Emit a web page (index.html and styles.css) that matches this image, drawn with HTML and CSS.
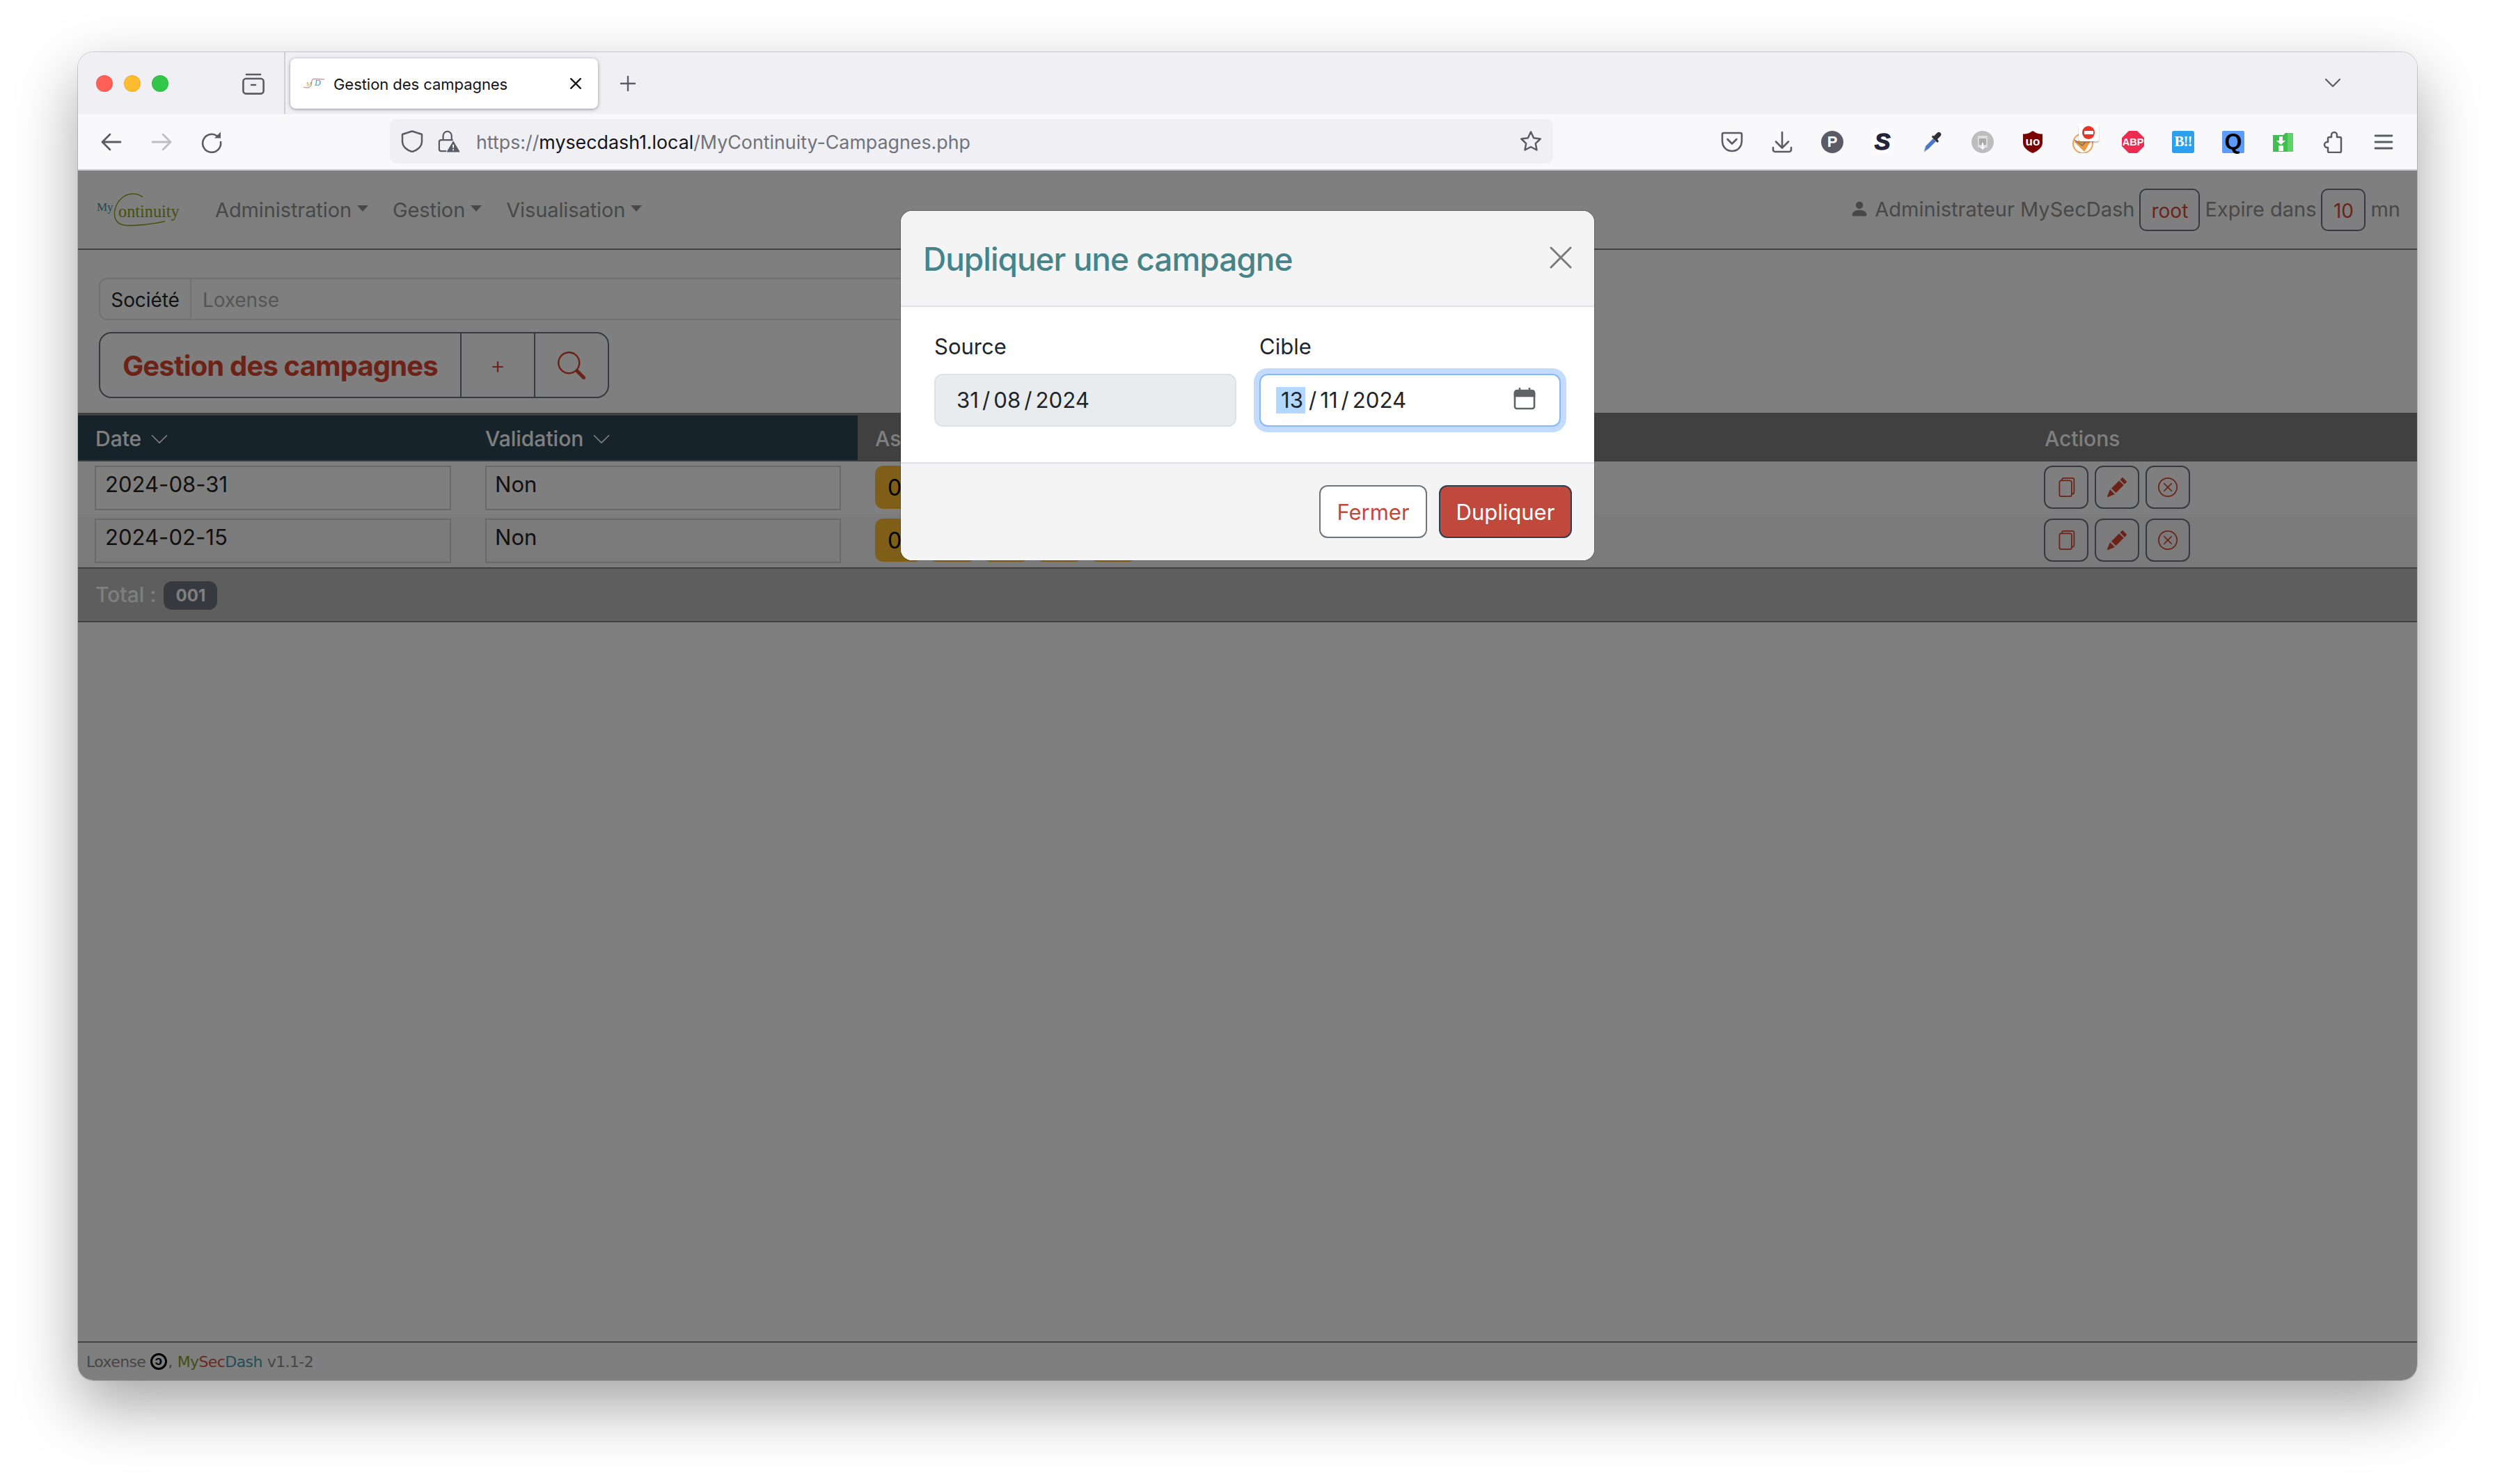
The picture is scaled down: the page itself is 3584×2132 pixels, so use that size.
FILE: index.html
```html
<!DOCTYPE html>
<html lang="fr">
<head>
<meta charset="utf-8">
<title>Gestion des campagnes</title>
<link rel="stylesheet" href="styles.css">
</head>
<body>
<div class="window">
  <header class="tabbar">
    <div class="lights"><i class="light red"></i><i class="light amber"></i><i class="light green"></i></div>
    <svg class="ffview" viewBox="0 0 32 32" fill="none" stroke="#5b5b66" stroke-width="2.6" stroke-linecap="round"><path d="M6 3h20"/><rect x="1.4" y="9" width="29.2" height="21.6" rx="4"/><path d="M13 18h6"/></svg>
    <div class="tabsep"></div>
    <div class="tab">
      <svg class="favicon" viewBox="0 0 32 14"><path d="M1 12c5 2 10 1 11-3l1-6c.5-2 1-2.5 3-2.5l15 .5" fill="none" stroke="#c96a6a" stroke-width="1"/><text x="5" y="11" class="fav-m">M</text><text x="17" y="10" class="fav-d">D</text></svg>
      <span class="tabtitle">Gestion des campagnes</span>
      <svg class="tabclose" viewBox="0 0 16 16" stroke="#15141a" stroke-width="1.8" stroke-linecap="round"><path d="M2.5 2.5l11 11M13.5 2.5l-11 11"/></svg>
    </div>
    <svg class="newtab" viewBox="0 0 24 24" stroke="#5b5b66" stroke-width="2.4" stroke-linecap="round"><path d="M12 2v20M2 12h20"/></svg>
    <svg class="tabmenu" viewBox="0 0 24 14" fill="none" stroke="#5b5b66" stroke-width="2.2" stroke-linecap="round" stroke-linejoin="round"><path d="M2 2l10 10L22 2"/></svg>
  </header>

  <nav class="toolbar">
    <svg class="tool" viewBox="0 0 32 32" fill="none" stroke="#5b5b66" stroke-width="2.8" stroke-linecap="round" stroke-linejoin="round"><path d="M3 16h26M14 5L3 16l11 11"/></svg>
    <svg class="tool" viewBox="0 0 32 32" fill="none" stroke="#bdbdc3" stroke-width="2.8" stroke-linecap="round" stroke-linejoin="round"><path d="M3 16h26M18 5l11 11-11 11"/></svg>
    <svg class="tool" viewBox="0 0 32 32" fill="none" stroke="#5b5b66" stroke-width="2.6" stroke-linecap="round"><path d="M24 7.5A13 13 0 1 0 29 16"/><path d="M20 10.5L29 10.5 29 1.5Z" fill="#5b5b66" stroke="none"/></svg>
    <div class="urlbar">
      <svg class="tool" viewBox="0 0 32 32" fill="none" stroke="#5b5b66" stroke-width="2.5" stroke-linejoin="round"><path d="M16 1.5L30 6v10c0 8-7 13-14 15C9 29 2 24 2 16V6Z"/></svg>
      <svg class="tool" viewBox="0 0 34 34" fill="none" stroke="#5b5b66" stroke-width="2.4"><path d="M8 15V8.5a6.5 6.5 0 0 1 13 0V15"/><path d="M13 32H5a3 3 0 0 1-3-3V18a3 3 0 0 1 3-3h18"/><path d="M23.5 17L33 33H14Z" fill="#5b5b66" stroke="#5b5b66" stroke-width="1" stroke-linejoin="round"/><path d="M23.5 22v5M23.5 29v2" stroke="#fff" stroke-width="2"/></svg>
      <span class="url">https://<b class="host">mysecdash1.local</b>/MyContinuity-Campagnes.php</span>
      <svg class="tool star" viewBox="0 0 32 32" fill="none" stroke="#5b5b66" stroke-width="2.5" stroke-linejoin="round"><path d="M16 2.5l4.2 8.7 9.5 1.3-6.900 6.600 1.700 9.400L16 24l-8.500 4.500 1.700-9.400-6.900-6.600 9.500-1.300Z"/></svg>
    </div>
    <div class="extensions">
      <svg class="tool" viewBox="0 0 32 32" fill="none" stroke="#5b5b66" stroke-width="2.6" stroke-linecap="round" stroke-linejoin="round"><path d="M4 3h24a2 2 0 0 1 2 2v9c0 9-6 15-14 15S2 23 2 14V5a2 2 0 0 1 2-2Z"/><path d="M9.5 12l6.5 6.5 6.5-6.5"/></svg>
      <svg class="tool" viewBox="0 0 32 32" fill="none" stroke="#5b5b66" stroke-width="2.6" stroke-linecap="round" stroke-linejoin="round"><path d="M16 2v22M7 15.5l9 9 9-9M3 24v3a3 3 0 0 0 3 3h20a3 3 0 0 0 3-3v-3"/></svg>
      <span class="ext ext-p">P</span>
      <span class="ext ext-s">S</span>
      <svg class="tool" viewBox="0 0 32 32"><path d="M4 30l2-8L17 11l4 4-11 11Z" fill="#4a78c8" stroke="#b8b8b8" stroke-width="1"/><path d="M15 9l8 8 2-2-2-3 4-4c2-2 2-4 0-5.5s-3-1-5 1l-4 4-2-1Z" fill="#2f3036"/></svg>
      <svg class="tool" viewBox="0 0 32 32"><circle cx="16" cy="16" r="16" fill="#bdbdbd"/><path d="M9 7h14v17H9Z" fill="#dcdcdc"/><path d="M11 11h10v9H11Z" fill="#aaa"/><path d="M15 17h2v6h3l-4 4-4-4h3Z" fill="#fff"/></svg>
      <svg class="tool" viewBox="0 0 32 32"><path d="M16 0l5 3c3 1.5 6 1.5 9 1.5V17c0 7-7 12-14 15C9 29 2 24 2 17V4.5c3 0 6 0 9-1.5Z" fill="#7b0000"/><text x="16" y="21" class="ub">uo</text></svg>
      <span class="ext ext-fox">
        <svg class="fox-art" viewBox="0 0 32 32"><circle cx="16" cy="18" r="14" fill="none" stroke="#e8a25a" stroke-width="2"/><path d="M3 15l26-3-11 18Z" fill="#ec9a3f"/><path d="M4 13l11 8 4-4" fill="none" stroke="#6f6f6f" stroke-width="1.5"/></svg>
        <span class="stop"><i class="stop-bar"></i></span>
      </span>
      <svg class="tool" viewBox="0 0 32 32"><path d="M10 0h12l10 10v12L22 32H10L0 22V10Z" fill="#ed2a4f"/><text x="16" y="21" class="abp">ABP</text></svg>
      <span class="ext ext-b">B!!</span>
      <span class="ext ext-q">Q</span>
      <svg class="tool" viewBox="0 0 32 32"><path d="M1 6h15l3-3h11v26a1 1 0 0 1-1 1H1Z" fill="#3fbf4f"/><path d="M22 3h8v27h-8Z" fill="#5fd36a"/><path d="M10 8h5v6h4l-6.5 6L6 14h4Z" fill="#fff"/><rect x="9" y="21" width="7" height="8" rx="1" fill="#fff"/></svg>
      <svg class="tool" viewBox="0 0 32 32" fill="none" stroke="#5b5b66" stroke-width="2.5" stroke-linejoin="round"><path d="M13 9V6a4 4 0 0 1 8 0v3h4a2 2 0 0 1 2 2v18a2 2 0 0 1-2 2H10a2 2 0 0 1-2-2v-5H7a4 4 0 0 1 0-8h1v-5a2 2 0 0 1 2-2Z"/></svg>
      <svg class="tool" viewBox="0 0 32 32" stroke="#5b5b66" stroke-width="2.8" stroke-linecap="round"><path d="M4 7h24M4 16h24M4 25h24"/></svg>
    </div>
  </nav>

  <div class="page">
    <div class="topnav">
      <div class="logo">
        <svg class="logo-art" viewBox="0 0 120 47"><path d="M66 5C58-1 46-1 38 5 28 12 24 25 26 34 28 43 36 46 46 46 62 46 84 43 98 40" fill="none" stroke="#8ca018" stroke-width="1.4"/><text x="0" y="25" class="logo-my">My</text><text x="31" y="34" class="logo-co">ontinuity</text></svg>
      </div>
      <a class="menu caret">Administration</a>
      <a class="menu caret">Gestion</a>
      <a class="menu caret">Visualisation</a>
      <div class="session">
        <svg class="person" viewBox="0 0 16 16"><path d="M3 14s-1 0-1-1 1-4 6-4 6 3 6 4-1 1-1 1H3zm5-6a3 3 0 1 0 0-6 3 3 0 0 0 0 6z"/></svg>
        <span class="who">Administrateur MySecDash</span>
        <span class="chip chip-root">root</span>
        <span>Expire dans</span>
        <span class="chip chip-min">10</span>
        <span>mn</span>
      </div>
    </div>

    <main class="content">
      <div class="crumbs">
        <span class="crumb-label">Société</span>
        <span class="crumb-value">Loxense</span>
      </div>
      <div class="titlegroup">
        <h1 class="pagetitle">Gestion des campagnes</h1>
        <button class="titlebtn plus">+</button>
        <button class="titlebtn search"><svg class="searchicon" viewBox="0 0 16 16"><path d="M11.742 10.344a6.5 6.5 0 1 0-1.397 1.398h-.001c.03.04.062.078.098.115l3.85 3.85a1 1 0 0 0 1.415-1.414l-3.85-3.85a1.007 1.007 0 0 0-.115-.1zM12 6.5a5.5 5.5 0 1 1-11 0 5.5 5.5 0 0 1 11 0z"/></svg></button>
      </div>

      <div class="grid thead">
        <div class="th sorted">Date <svg class="chev" viewBox="0 0 16 16"><path d="M1.646 4.646a.5.5 0 0 1 .708 0L8 10.293l5.646-5.647a.5.5 0 0 1 .708.708l-6 6a.5.5 0 0 1-.708 0l-6-6a.5.5 0 0 1 0-.708z"/></svg></div>
        <div class="th sorted">Validation <svg class="chev" viewBox="0 0 16 16"><path d="M1.646 4.646a.5.5 0 0 1 .708 0L8 10.293l5.646-5.647a.5.5 0 0 1 .708.708l-6 6a.5.5 0 0 1-.708 0l-6-6a.5.5 0 0 1 0-.708z"/></svg></div>
        <div class="th">Assignations</div>
        <div class="th">Actions</div>
      </div>

      <div class="grid row">
        <div class="cell"><div class="field">2024-08-31</div></div>
        <div class="cell"><div class="field">Non</div></div>
        <div class="cell badges"><span class="badge">01</span><span class="badge">00</span><span class="badge">00</span><span class="badge">00</span><span class="badge">00</span></div>
        <div class="cell actions">
          <button class="act"><svg class="acticon" viewBox="0 0 16 16"><use href="#i-files"/></svg></button>
          <button class="act"><svg class="acticon" viewBox="0 0 16 16"><use href="#i-pencil"/></svg></button>
          <button class="act"><svg class="acticon" viewBox="0 0 16 16"><use href="#i-x"/></svg></button>
        </div>
      </div>
      <div class="grid row alt">
        <div class="cell"><div class="field">2024-02-15</div></div>
        <div class="cell"><div class="field">Non</div></div>
        <div class="cell badges"><span class="badge">00</span><span class="badge">00</span><span class="badge">00</span><span class="badge">00</span><span class="badge">00</span></div>
        <div class="cell actions">
          <button class="act"><svg class="acticon" viewBox="0 0 16 16"><use href="#i-files"/></svg></button>
          <button class="act"><svg class="acticon" viewBox="0 0 16 16"><use href="#i-pencil"/></svg></button>
          <button class="act"><svg class="acticon" viewBox="0 0 16 16"><use href="#i-x"/></svg></button>
        </div>
      </div>
      <div class="total"><span class="totallabel">Total :</span><span class="totalbadge">001</span></div>
    </main>

    <footer class="foot">
      <span>Loxense</span>
      <span class="copyleft"><span class="copyleft-c">c</span></span><span>,</span>
      <span class="brand"><span class="b-my">My</span><span class="b-sec">Sec</span><span class="b-dash">Dash</span></span>
      <span>v1.1-2</span>
    </footer>

    <div class="backdrop">
      <section class="modal">
        <div class="modal-head">
          <h2 class="modal-title">Dupliquer une campagne</h2>
          <svg class="modal-close" viewBox="0 0 32 32" stroke="#7a7a7a" stroke-width="3" stroke-linecap="round"><path d="M2 2l28 28M30 2L2 30"/></svg>
        </div>
        <div class="modal-body">
          <div class="form-col">
            <label class="form-label">Source</label>
            <div class="dateinput disabled"><span>31</span><em>/</em><span>08</span><em>/</em><span>2024</span></div>
          </div>
          <div class="form-col">
            <label class="form-label">Cible</label>
            <div class="dateinput focus"><span class="sel">13</span><em>/</em><span>11</span><em>/</em><span>2024</span>
              <svg class="calendar" viewBox="0 0 32 32" fill="none" stroke="#5f6368" stroke-width="2.6"><rect x="2" y="5" width="28" height="25" rx="3"/><path d="M2 7a3 3 0 0 1 3-3h22a3 3 0 0 1 3 3v5H2Z" fill="#5f6368"/><path d="M9 1v5M23 1v5" stroke-linecap="round"/></svg>
            </div>
          </div>
        </div>
        <div class="modal-foot">
          <button class="btn btn-close">Fermer</button>
          <button class="btn btn-go">Dupliquer</button>
        </div>
      </section>
    </div>
  </div>
</div>

<svg class="defs" width="0" height="0">
  <defs>
    <path id="i-files" d="M13 0H6a2 2 0 0 0-2 2 2 2 0 0 0-2 2v10a2 2 0 0 0 2 2h7a2 2 0 0 0 2-2 2 2 0 0 0 2-2V2a2 2 0 0 0-2-2zm0 13V4a2 2 0 0 0-2-2H5a1 1 0 0 1 1-1h7a1 1 0 0 1 1 1v10a1 1 0 0 1-1 1zM3 4a1 1 0 0 1 1-1h7a1 1 0 0 1 1 1v10a1 1 0 0 1-1 1H4a1 1 0 0 1-1-1V4z"/>
    <path id="i-pencil" d="M12.854.146a.5.5 0 0 0-.707 0L10.5 1.793 14.207 5.5l1.647-1.646a.5.5 0 0 0 0-.708l-3-3zm.646 6.061L9.793 2.5 3.293 9H3.5a.5.5 0 0 1 .5.5v.5h.5a.5.5 0 0 1 .5.5v.5h.5a.5.5 0 0 1 .5.5v.5h.5a.5.5 0 0 1 .5.5v.207l6.5-6.5zm-7.468 7.468A.5.5 0 0 1 6 13.5V13h-.5a.5.5 0 0 1-.5-.5V12h-.5a.5.5 0 0 1-.5-.5V11h-.5a.5.5 0 0 1-.5-.5V10h-.5a.499.499 0 0 1-.175-.032l-.179.178a.5.5 0 0 0-.11.168l-2 5a.5.5 0 0 0 .65.65l5-2a.5.5 0 0 0 .168-.11l.178-.178z"/>
    <path id="i-x" d="M8 15A7 7 0 1 1 8 1a7 7 0 0 1 0 14zm0 1A8 8 0 1 0 8 0a8 8 0 0 0 0 16zM4.646 4.646a.5.5 0 0 1 .708 0L8 7.293l2.646-2.647a.5.5 0 0 1 .708.708L8.707 8l2.647 2.646a.5.5 0 0 1-.708.708L8 8.707l-2.646 2.647a.5.5 0 0 1-.708-.708L7.293 8 4.646 5.354a.5.5 0 0 1 0-.708z"/>
  </defs>
</svg>
</body>
</html>
```
FILE: styles.css
```css
* { box-sizing: border-box; }
html, body { margin: 0; height: 100%; background: #fff; }
body { padding: 75px 112px 149px; font-family: Inter, "Liberation Sans", sans-serif; overflow: hidden; }
button { font-family: inherit; }
svg { display: block; flex: none; }
.defs { position: absolute; }

.window { height: 1908px; border-radius: 22px; overflow: hidden; display: flex; flex-direction: column; box-shadow: 0 0 0 1px rgba(0,0,0,.16), 0 36px 90px rgba(0,0,0,.36); }

/* tab strip */
.tabbar { height: 89px; flex: none; background: #f0f0f4; display: flex; align-items: center; padding-left: 26px; }
.lights { display: flex; gap: 16px; }
.light { width: 24px; height: 24px; border-radius: 50%; border: 1px solid rgba(0,0,0,.08); }
.red { background: #ff5f57; }
.amber { background: #febc2e; }
.green { background: #32c748; }
.ffview { width: 32px; height: 32px; margin-left: 106px; }
.tabsep { width: 2px; height: 100%; background: #cfcfd8; margin-left: 28px; }
.tab { width: 442px; height: 72px; margin-left: 7px; background: #fff; border-radius: 8px; box-shadow: 0 1px 5px rgba(0,0,0,.4); display: flex; align-items: center; padding-left: 18px; }
.favicon { width: 32px; height: 14px; margin-right: 12px; }
.fav-m { font: 9px "Liberation Serif", serif; fill: #a8b45a; }
.fav-d { font: italic 12px "Liberation Serif", serif; fill: #4f8f9c; }
.tabtitle { font-size: 22px; letter-spacing: -.05px; color: #15141a; margin-top: 3px; width: 338px; }
.tabclose { width: 20px; height: 20px; }
.newtab { width: 24px; height: 24px; margin-left: 31px; }
.tabmenu { width: 24px; height: 14px; margin-left: auto; margin-right: 109px; margin-top: -2px; }

/* toolbar */
.toolbar { height: 81px; flex: none; background: #f9f9fb; border-bottom: 2px solid #cfcfd2; display: flex; align-items: center; padding: 0 32px; gap: 40px; }
.tool { width: 32px; height: 32px; }
.urlbar { width: 1671px; height: 64px; margin-left: 200px; background: #f0f0f4; border-radius: 10px; display: flex; align-items: center; padding-left: 16px; gap: 21px; margin-top: -1px; }
.url { font-size: 26.8px; color: #72727a; margin-left: 2px; margin-top: 1px; }
.host { font-weight: 400; color: #15141a; }
.star { margin-left: auto; margin-right: 16px; }
.extensions { margin-left: auto; display: flex; gap: 40px; align-items: center; }
.ext { width: 32px; height: 32px; display: flex; align-items: center; justify-content: center; flex: none; font-family: "Liberation Sans", sans-serif; font-weight: 700; }
.ext-p { background: #5b5b66; color: #fff; border-radius: 50%; font-size: 22px; }
.ext-s { color: #24243a; font-size: 34px; font-style: italic; background: #fff; border-radius: 50%; -webkit-text-stroke: 1.4px #24243a; }
.ext-b { background: #2aa0ef; color: #fff; border-radius: 3px; font-family: "Liberation Serif", serif; font-size: 21px; letter-spacing: -1px; }
.ext-q { background: #5c9bfb; color: #000; font-size: 32px; border-radius: 2px; }
.ub { font: 700 17px "Liberation Sans", sans-serif; fill: #fff; text-anchor: middle; }
.abp { font: 700 14.5px "Liberation Sans", sans-serif; fill: #fff; text-anchor: middle; }
.ext-fox { position: relative; }
.fox-art { width: 32px; height: 32px; }
.stop { position: absolute; left: 10px; top: -10px; width: 29px; height: 25px; background: #fff; border-radius: 3px; display: flex; align-items: center; justify-content: center; box-shadow: 0 2px 2px rgba(0,0,0,.25); }
.stop::before { content: ""; position: absolute; left: 5px; top: 3px; width: 18px; height: 19px; border-radius: 50%; background: #e8352a; }
.stop-bar { position: relative; width: 13px; height: 5px; background: #fff; margin-left: -1px; }

/* page */
.page { flex: 1; position: relative; background: #fff; display: flex; flex-direction: column; min-height: 0; }
.topnav { height: 114px; flex: none; border-bottom: 2px solid #808080; display: flex; align-items: center; padding: 0 24px 0 27px; font-size: 29px; color: #909090; }
.logo { width: 119px; margin-right: 51px; margin-top: 1px; }
.logo-art { width: 120px; height: 47px; overflow: visible; }
.logo-my { font: 17px "Liberation Serif", serif; fill: #3f8fa3; }
.logo-co { font: 24.3px "Liberation Serif", serif; fill: #8ca018; }
.menu { margin-right: 35px; margin-top: 1px; letter-spacing: -.1px; }
.caret { display: flex; align-items: center; gap: 8px; }
.caret::after { content: ""; border-top: 9px solid currentColor; border-left: 8px solid transparent; border-right: 8px solid transparent; margin-top: -4px; }
.session { margin-left: auto; display: flex; align-items: center; gap: 7px; margin-top: -2px; }
.person { width: 28px; height: 28px; fill: #909090; margin-right: 1px; }
.chip { height: 61px; border: 2px solid #6c757d; border-radius: 10px; color: #d24a3a; display: flex; align-items: center; justify-content: center; padding-top: 3px; font-size: 28px; margin-top: 2px; }
.chip-root { width: 87px; }
.chip-min { width: 64px; }

.content { flex: 1; padding-top: 40px; display: flex; flex-direction: column; }
.crumbs { margin: 0 0 17px 30px; width: 1300px; height: 61px; border: 2px solid #dee2e6; border-radius: 12px; display: flex; align-items: center; font-size: 28px; }
.crumb-label { width: 131px; height: 100%; border-right: 2px solid #dee2e6; display: flex; align-items: center; justify-content: center; color: #212529; letter-spacing: -.1px; padding-top: 2px; }
.crumb-value { padding-left: 16px; color: #aaa; padding-top: 2px; letter-spacing: -.1px; }
.titlegroup { margin: 0 0 21px 30px; width: 733px; height: 95px; border: 2px solid #6c757d; border-radius: 18px; display: flex; align-items: stretch; }
.pagetitle { margin: 0; width: 517px; display: flex; align-items: center; justify-content: center; font-size: 40px; font-weight: 700; letter-spacing: -.85px; color: #d8452f; padding-top: 1px; }
.titlebtn { flex: none; background: none; border: 0; border-left: 2px solid #6c757d; padding: 0; display: flex; align-items: center; justify-content: center; color: #d8452f; }
.plus { width: 106px; font-size: 34px; font-weight: 300; }
.search { flex: 1; }
.searchicon { width: 40px; height: 40px; fill: #d8452f; }

.grid { display: grid; grid-template-columns: 560px 560px 1fr 560px; }
.thead { height: 70px; background: #808080; padding: 4px 0 2px; }
.th { padding-left: 25px; display: flex; align-items: center; gap: 12px; color: #fff; font-size: 30px; font-weight: 500; padding-top: 2px; }
.sorted { background: #2e4756; }
.chev { width: 28px; height: 28px; fill: #fff; margin-top: 2px; }
.row { height: 76px; background: #fff; }
.alt { background: #f6f6f6; }
.cell { padding: 6px 24px; }
.cell + .cell { padding-left: 25px; }
.field { height: 64px; border: 2px solid #d2d2d2; padding: 1px 13px; font-size: 31px; line-height: 48px; color: #222; letter-spacing: .05px; }
.cell + .cell .field { padding-left: 12px; }
.badges { display: flex; gap: 9px; padding-left: 24px; }
.badges .badge { width: 68px; height: 62px; background: #ffbe2e; border-radius: 12px; display: flex; align-items: center; padding-left: 18px; font-size: 32px; color: #000; }
.cell.actions { display: flex; gap: 9px; padding-left: 24px; align-items: flex-start; }
.act { width: 64px; height: 62px; background: none; border: 2px solid #6c757d; border-radius: 12px; padding: 0; display: flex; align-items: center; justify-content: center; }
.acticon { width: 28px; height: 28px; fill: #d8452f; }
.total { height: 79px; border-top: 2px solid #808080; border-bottom: 2px solid #808080; background: #bcbcbc; padding-left: 25px; display: flex; align-items: center; gap: 11px; color: #fff; font-size: 30px; font-weight: 500; }
.totallabel { margin-top: -2px; }
.totalbadge { width: 77px; height: 41px; margin-top: 2px; background: #6c757d; border-radius: 12px; display: flex; align-items: center; justify-content: center; font-size: 24px; font-weight: 700; }

.foot { height: 56px; flex: none; border-top: 2px solid #888; padding: 0 0 0 12px; display: flex; align-items: center; gap: 7px; font: 22px "DejaVu Sans", sans-serif; letter-spacing: -.6px; color: #8c8c8c; }
.copyleft { width: 24px; height: 24px; margin-right: -6px; border: 3px solid #000; border-radius: 50%; background: none; display: flex; align-items: center; justify-content: center; color: #000; font: 700 19px "Liberation Sans", sans-serif; }
.copyleft-c { display: block; transform: scaleX(-1); line-height: 1; margin-top: -3px; }
.b-my { color: #8a9c28; }
.b-sec { color: #d65440; }
.b-dash { color: #469cb0; }

/* modal */
.backdrop { position: absolute; inset: 0; background: rgba(0,0,0,.5); display: flex; justify-content: center; align-items: flex-start; padding-top: 58px; }
.modal { width: 996px; height: 502px; border-radius: 16px; overflow: hidden; background: #fff; box-shadow: 0 0 0 1px rgba(0,0,0,.2); display: flex; flex-direction: column; }
.modal-head { height: 138px; flex: none; background: #f4f4f4; border-bottom: 2px solid #dee2e6; display: flex; align-items: center; justify-content: space-between; padding: 0 32px; }
.modal-title { margin: 2px 0 0; font-size: 46px; font-weight: 500; letter-spacing: -1px; color: #478489; }
.modal-close { width: 32px; height: 32px; margin-top: -2px; }
.modal-body { height: 223px; flex: none; display: grid; grid-template-columns: 434px 433px; gap: 33px; padding: 38px 48px 0; }
.form-col { display: flex; flex-direction: column; }
.form-label { font-size: 31px; line-height: 38px; color: #212529; height: 58px; }
.dateinput { height: 76px; border-radius: 12px; border: 2px solid #dee2e6; display: flex; align-items: center; padding-left: 30px; font-size: 31.2px; color: #212529; }
.dateinput em { font-style: normal; margin: 0 5px; }
.disabled { background: #e9ecef; }
.focus { background: #fff; border-color: #86b7fe; box-shadow: 0 0 0 8px #c2dbfe; padding-left: 22px; }
.sel { background: #b3d7ff; padding: 0 3px 0 7px; height: 38px; line-height: 38px; }
.calendar { width: 32px; height: 32px; margin-left: auto; margin-right: 34px; margin-top: -4px; }
.modal-foot { flex: 1; background: #f4f4f4; border-top: 2px solid #dee2e6; display: flex; justify-content: flex-end; gap: 17px; padding: 31px 32px 0; }
.btn { height: 76px; border-radius: 12px; font-size: 31px; padding: 0; display: flex; align-items: center; justify-content: center; }
.btn-close { width: 155px; background: #fff; color: #c0493b; border: 2px solid #6c757d; }
.btn-go { width: 191px; background: #c0493b; color: #fff; border: 2px solid #2c3e50; }
```
